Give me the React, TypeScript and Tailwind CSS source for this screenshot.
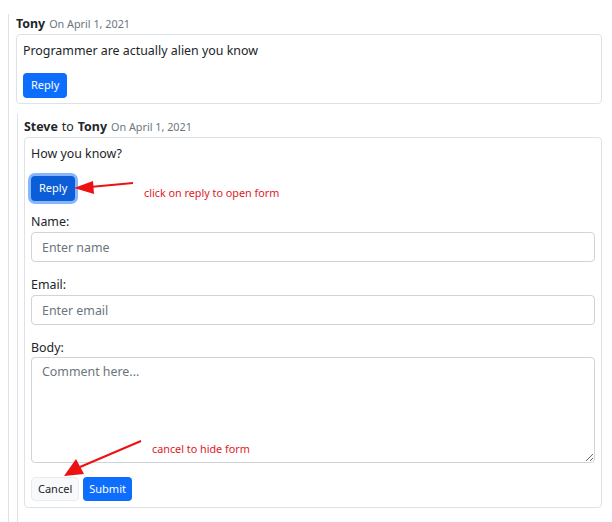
import React from "react";

const font = { fontFamily: '"Noto Sans", "Open Sans", sans-serif' };

const Header = ({ from, to }: { from: string; to?: string }) => (
  <div className="h-[20px] flex items-center text-[12.4px] text-[#212529]">
    <span className="font-bold">{from}</span>
    {to && (
      <>
        <span className="ml-[4px]">to</span>
        <span className="ml-[4px] font-bold">{to}</span>
      </>
    )}
    <span className="ml-[4px] text-[10.8px] text-[#6c757d]">On April 1, 2021</span>
  </div>
);

const Field = ({ label, placeholder }: { label: string; placeholder: string }) => (
  <div className="mb-[13px]">
    <label className="block h-[19px] leading-[19px] mb-[1px] text-[12.4px] text-[#212529]">{label}</label>
    <input
      type="text"
      placeholder={placeholder}
      className="block w-full h-[30px] px-[10px] rounded-[4px] border border-[#ced4da] bg-white text-[12.4px] placeholder:text-[#6c757d] outline-none"
    />
  </div>
);

export default function App() {
  return (
    <div className="relative w-[612px] h-[522px] overflow-hidden bg-white" style={font}>
      <div className="mt-[14px] ml-[8px] mr-[10px] pl-[7px] border-l border-[#dee2e6] h-[520px]">
        <Header from="Tony" />
        <div className="border border-[#dee2e6] rounded-[4px] px-[6px] pt-[6px] pb-[5px]">
          <p className="h-[19px] leading-[19px] mb-[13px] text-[12.4px] text-[#212529]">
            Programmer are actually alien you know
          </p>
          <button className="block h-[25px] px-[8px] rounded-[4px] bg-[#0d6efd] text-white text-[11px]">Reply</button>
        </div>

        <div className="mt-[10px] ml-[1px] border-l border-[#dee2e6] pl-[6px] pt-[3px] h-[420px]">
          <Header from="Steve" to="Tony" />
          <div className="border border-[#dee2e6] rounded-[4px] px-[6px] pt-[6px] pb-[6px]">
            <p className="h-[19px] leading-[19px] mb-[13px] text-[12.4px] text-[#212529]">How you know?</p>
            <button className="block h-[25px] px-[8px] rounded-[4px] bg-[#0b5ed7] text-white text-[11px] ring-[3px] ring-[#86b7fe]">
              Reply
            </button>
            <div className="mt-[11px]">
              <Field label="Name:" placeholder="Enter name" />
              <Field label="Email:" placeholder="Enter email" />
              <div className="mb-[14px]">
                <label className="block h-[19px] leading-[19px] text-[12.4px] text-[#212529]">Body:</label>
                <textarea
                  placeholder="Comment here..."
                  className="block w-full h-[106px] px-[10px] py-[5px] rounded-[4px] border border-[#ced4da] text-[12.4px] placeholder:text-[#6c757d] outline-none"
                />
              </div>
              <div className="flex gap-[4px]">
                <button className="h-[24px] px-[6px] rounded-[4px] bg-[#f8f9fa] border border-[#e9ecef] text-[#212529] text-[11px]">
                  Cancel
                </button>
                <button className="h-[24px] px-[6px] rounded-[4px] bg-[#0d6efd] text-white text-[11px]">Submit</button>
              </div>
            </div>
          </div>
        </div>
      </div>

      <span className="absolute left-[144px] top-[185px] text-[10.8px] text-[#e0191e]">click on reply to open form</span>
      <span className="absolute left-[152px] top-[441px] text-[10.8px] text-[#e0191e]">cancel to hide form</span>

      <svg className="absolute left-0 top-0 pointer-events-none" width="612" height="522">
        <line x1="133" y1="183" x2="90" y2="187" stroke="#ee1111" strokeWidth="2" />
        <polygon points="74,188 93,181 94,194" fill="#ee1111" />
        <line x1="141" y1="441" x2="80" y2="467" stroke="#ee1111" strokeWidth="2" />
        <polygon points="64,476 76,459 84,474" fill="#ee1111" />
      </svg>
    </div>
  );
}
